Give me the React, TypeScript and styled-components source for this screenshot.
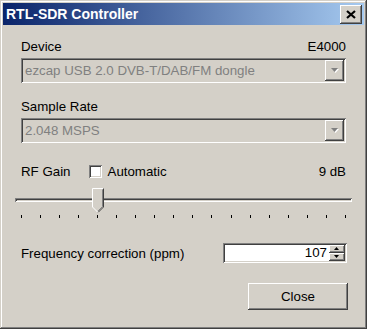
import React from 'react';
import styled, { createGlobalStyle } from 'styled-components';

const GAINS = [-1, 1.5, 4, 6.5, 9, 11.5, 14, 16.5, 19, 21.5, 24, 29, 34, 42, 43, 45, 47, 49];

const GlobalStyle = createGlobalStyle`
  html, body {
    margin: 0;
    padding: 0;
    background: #d4d0c8;
  }
  body {
    font-family: "Liberation Sans", Arial, sans-serif;
    font-size: 13.3px;
    color: #000;
  }
`;

const Window = styled.div`
  width: 367px;
  height: 329px;
  box-sizing: border-box;
  padding: 3px;
  background: #d4d0c8;
  box-shadow: inset -1px -1px #404040, inset 1px 1px #d4d0c8,
    inset -2px -2px #808080, inset 2px 2px #ffffff;
  display: flex;
  flex-direction: column;
`;

const TitleBar = styled.div`
  height: 22px;
  display: flex;
  align-items: center;
  justify-content: space-between;
  padding: 0 2px 0 3px;
  background: linear-gradient(to right, #0a246a, #a6caf0);
`;

const Title = styled.span`
  color: #fff;
  font-weight: bold;
  font-size: 14px;
  line-height: 16px;
  white-space: nowrap;
`;

const Raised = styled.div`
  box-sizing: border-box;
  background: #d4d0c8;
  box-shadow: inset -1px -1px #404040, inset 1px 1px #ffffff,
    inset -2px -2px #808080, inset 2px 2px #d4d0c8;
  display: flex;
  align-items: center;
  justify-content: center;
`;

const CloseX = styled(Raised)`
  width: 22px;
  height: 19px;
`;

const Body = styled.div`
  flex: 1;
  display: flex;
  flex-direction: column;
  padding: 14px 18px 0 18px;
`;

const LabelRow = styled.div<{ $gap?: number }>`
  display: flex;
  justify-content: space-between;
  align-items: center;
  line-height: 15px;
  margin-top: ${(p) => p.$gap ?? 0}px;
`;

const Sunken = styled.div<{ $bg?: string }>`
  box-sizing: border-box;
  background: ${(p) => p.$bg ?? '#d4d0c8'};
  box-shadow: inset 1px 1px #808080, inset -1px -1px #ffffff,
    inset 2px 2px #404040, inset -2px -2px #d4d0c8;
`;

const Combo = styled(Sunken)`
  margin-top: 4px;
  height: 25px;
  display: flex;
  align-items: center;
  padding: 2px 2px 2px 4px;
`;

const ComboText = styled.span`
  flex: 1;
  color: #808080;
  white-space: nowrap;
  overflow: hidden;
`;

const ArrowButton = styled(Raised)`
  width: 19px;
  height: 21px;
`;

const GainRow = styled.div`
  display: flex;
  align-items: center;
  line-height: 15px;
  margin-top: 21px;
`;

const Check = styled(Sunken)`
  width: 13px;
  height: 13px;
  margin: 0 6px 0 18px;
`;

const Spacer = styled.div`
  flex: 1;
`;

const Slider = styled.div`
  position: relative;
  margin-top: 9px;
  height: 31px;
`;

const Track = styled.div`
  position: absolute;
  left: -6px;
  right: -6px;
  top: 10px;
  height: 4px;
  box-shadow: inset 1px 1px #808080, inset -1px -1px #ffffff,
    inset 2px 2px #404040, inset -2px -2px #d4d0c8;
`;

const Thumb = styled.svg`
  position: absolute;
  top: 0;
  width: 12px;
  height: 26px;
`;

const Ticks = styled.div`
  position: absolute;
  left: 0;
  right: 0;
  top: 27px;
  display: flex;
  justify-content: space-between;
`;

const Tick = styled.span`
  width: 1px;
  height: 3px;
  background: #000;
`;

const FreqRow = styled.div`
  display: flex;
  align-items: center;
  justify-content: space-between;
  margin-top: 24px;
`;

const SpinBox = styled(Sunken)`
  width: 124px;
  height: 20px;
  display: flex;
  align-items: center;
  padding: 2px;
  margin-right: -1px;
`;

const SpinValue = styled.span`
  flex: 1;
  text-align: right;
  padding-right: 2px;
  line-height: 16px;
`;

const SpinButtons = styled.div`
  display: flex;
  flex-direction: column;
  width: 16px;
  height: 16px;
`;

const SpinHalf = styled(Raised)`
  flex: 1;
`;

const Footer = styled.div`
  display: flex;
  justify-content: flex-end;
  margin-top: 20px;
  margin-right: -2px;
`;

const Button = styled(Raised)`
  width: 100px;
  height: 27px;
`;

const Triangle: React.FC<{ up?: boolean; disabled?: boolean; w?: number }> = ({ up, disabled, w = 7 }) => {
  const h = Math.ceil(w / 2);
  const pts = up ? `0,${h} ${w},${h} ${w / 2},0` : `0,0 ${w},0 ${w / 2},${h}`;
  return (
    <svg width={w + 1} height={h + 1} viewBox={`0 0 ${w + 1} ${h + 1}`}>
      {disabled && <polygon points={pts} fill="#fff" transform="translate(1,1)" />}
      <polygon points={pts} fill={disabled ? '#808080' : '#000'} />
    </svg>
  );
};

export default function App() {
  const gainIndex = GAINS.indexOf(9);
  const thumbLeft = (gainIndex / (GAINS.length - 1)) * 324 + 0.5 - 6;

  return (
    <>
      <GlobalStyle />
      <Window>
        <TitleBar>
          <Title>RTL-SDR Controller</Title>
          <CloseX>
            <svg width="10" height="9" viewBox="0 0 10 9">
              <path d="M1 1 L9 8 M9 1 L1 8" stroke="#000" strokeWidth="2.2" />
            </svg>
          </CloseX>
        </TitleBar>
        <Body>
          <LabelRow>
            <span>Device</span>
            <span>E4000</span>
          </LabelRow>
          <Combo>
            <ComboText>ezcap USB 2.0 DVB-T/DAB/FM dongle</ComboText>
            <ArrowButton>
              <Triangle disabled />
            </ArrowButton>
          </Combo>

          <LabelRow $gap={16}>
            <span>Sample Rate</span>
          </LabelRow>
          <Combo>
            <ComboText>2.048 MSPS</ComboText>
            <ArrowButton>
              <Triangle disabled />
            </ArrowButton>
          </Combo>

          <GainRow>
            <span>RF Gain</span>
            <Check $bg="#fff" />
            <span>Automatic</span>
            <Spacer />
            <span>{GAINS[gainIndex]} dB</span>
          </GainRow>

          <Slider>
            <Track />
            <Thumb viewBox="0 0 12 26" style={{ left: thumbLeft }}>
              <polygon points="0.5,0.5 11.5,0.5 11.5,19 6,24.5 0.5,19" fill="#d4d0c8" />
              <polyline points="0.5,19 0.5,0.5 11.5,0.5" fill="none" stroke="#fff" />
              <polyline points="11.5,0.5 11.5,19 6,24.5" fill="none" stroke="#404040" />
              <polyline points="10.5,1.5 10.5,18.6 6,23.1" fill="none" stroke="#808080" />
              <line x1="0.5" y1="19" x2="6" y2="24.5" stroke="#fff" />
            </Thumb>
            <Ticks>
              {GAINS.map((g) => (
                <Tick key={g} />
              ))}
            </Ticks>
          </Slider>

          <FreqRow>
            <span>Frequency correction (ppm)</span>
            <SpinBox $bg="#fff">
              <SpinValue>107</SpinValue>
              <SpinButtons>
                <SpinHalf>
                  <Triangle up w={5} />
                </SpinHalf>
                <SpinHalf>
                  <Triangle w={5} />
                </SpinHalf>
              </SpinButtons>
            </SpinBox>
          </FreqRow>

          <Footer>
            <Button>Close</Button>
          </Footer>
        </Body>
      </Window>
    </>
  );
}
